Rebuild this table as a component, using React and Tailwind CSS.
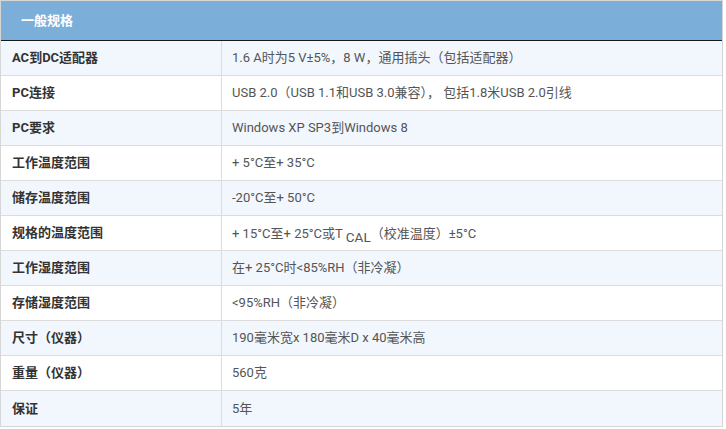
import React from "react";

const rows = [
  ["AC到DC适配器", "1.6 A时为5 V±5%，8 W，通用插头（包括适配器）"],
  ["PC连接", "USB 2.0（USB 1.1和USB 3.0兼容）， 包括1.8米USB 2.0引线"],
  ["PC要求", "Windows XP SP3到Windows 8"],
  ["工作温度范围", "+ 5°C至+ 35°C"],
  ["储存温度范围", "-20°C至+ 50°C"],
  ["规格的温度范围", "TCAL"],
  ["工作湿度范围", "在+ 25°C时<85%RH（非冷凝）"],
  ["存储湿度范围", "<95%RH（非冷凝）"],
  ["尺寸（仪器）", "190毫米宽x 180毫米D x 40毫米高"],
  ["重量（仪器）", "560克"],
  ["保证", "5年"],
];

export default function App() {
  return (
    <div
      className="w-[726px] h-[429px] bg-white"
      style={{ fontFamily: 'Roboto, "Noto Sans CJK SC", sans-serif' }}
    >
      <div className="w-[723px] border border-[#d6d6d6]">
        <div className="h-[40px] bg-[#7bafda] border-b border-[#1a1a1a] flex items-center pl-[20px] text-white text-[13px] font-bold">
          一般规格
        </div>
        {rows.map(([k, v], i) => (
          <div
            key={i}
            className={`flex h-[35px] ${i < rows.length - 1 ? "border-b border-[#dcdcdc]" : ""} ${
              i % 2 === 0 ? "bg-[#f2f7fe]" : "bg-white"
            }`}
          >
            <div className="w-[221px] shrink-0 border-r border-[#dcdcdc] flex items-center pl-[11px] text-[13px] font-bold text-[#333]">
              {k}
            </div>
            <div className="flex-1 flex items-center pl-[10px] text-[13px] text-[#555] whitespace-pre">
              {v === "TCAL" ? (
                <span>
                  + 15°C至+ 25°C或T <span className="text-[13.5px] relative top-[4px]">CAL</span>（校准温度）±5°C
                </span>
              ) : (
                v
              )}
            </div>
          </div>
        ))}
      </div>
    </div>
  );
}
